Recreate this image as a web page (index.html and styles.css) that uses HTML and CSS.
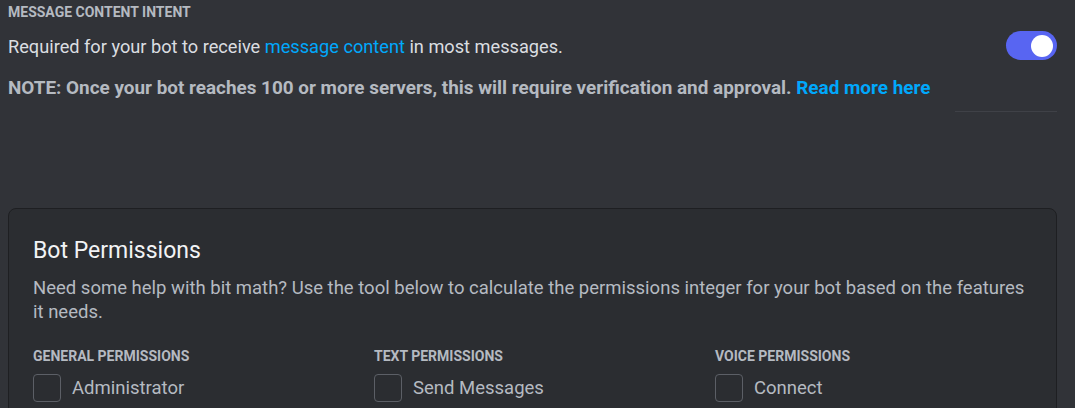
FILE: index.html
```html
<!DOCTYPE html>
<html>
<head>
<meta charset="utf-8">
<link rel="stylesheet" href="styles.css">
</head>
<body>
<div class="page">
  <section class="intent">
    <div class="intent-title">MESSAGE CONTENT INTENT</div>
    <div class="intent-row">
      <div class="intent-text">Required for your bot to receive <a class="link" href="#">message content</a> in most messages.</div>
      <div class="toggle"><span class="knob"></span></div>
    </div>
    <div class="note">NOTE: Once your bot reaches 100 or more servers, this will require verification and approval. <a class="link" href="#">Read more here</a></div>
    <div class="divider-row"><div class="divider"></div></div>
  </section>

  <section class="card">
    <h2 class="card-title">Bot Permissions</h2>
    <p class="card-desc">Need some help with bit math? Use the tool below to calculate the permissions integer for your bot based on the features it needs.</p>
    <div class="perm-grid">
      <div class="perm-col">
        <div class="perm-head">GENERAL PERMISSIONS</div>
        <label class="perm-item"><span class="box"></span><span class="perm-label">Administrator</span></label>
      </div>
      <div class="perm-col">
        <div class="perm-head">TEXT PERMISSIONS</div>
        <label class="perm-item"><span class="box"></span><span class="perm-label">Send Messages</span></label>
      </div>
      <div class="perm-col">
        <div class="perm-head">VOICE PERMISSIONS</div>
        <label class="perm-item"><span class="box"></span><span class="perm-label">Connect</span></label>
      </div>
    </div>
  </section>
</div>
</body>
</html>
```
FILE: styles.css
```css
* { box-sizing: border-box; }
html, body {
  margin: 0;
  padding: 0;
  background: #313338;
  height: 100%;
  overflow: hidden;
}
body {
  font-family: Roboto, "Noto Sans", sans-serif;
  color: #dbdee1;
}
.page {
  padding: 0 18px 0 8px;
}
.intent-title {
  margin-top: 2px;
  font-size: 14px;
  font-weight: 700;
  line-height: 20px;
  color: #b5bac1;
}
.intent-row {
  margin-top: 9px;
  display: flex;
  align-items: center;
  justify-content: space-between;
  height: 29px;
}
.intent-text {
  font-size: 18.2px;
  line-height: 24px;
  padding-top: 2px;
  color: #dbdee1;
}
.link {
  color: #00a8fc;
  text-decoration: none;
}
.toggle {
  width: 51px;
  height: 29px;
  border-radius: 15px;
  background: #5865f2;
  display: flex;
  align-items: center;
  justify-content: flex-end;
  padding-right: 4px;
}
.knob {
  width: 22px;
  height: 22px;
  border-radius: 50%;
  background: #ffffff;
}
.note {
  margin-top: 16px;
  font-size: 18.9px;
  line-height: 24px;
  font-weight: 700;
  color: #b5bac1;
}
.divider-row {
  display: flex;
  justify-content: flex-end;
  margin-top: 11px;
}
.divider {
  width: 102px;
  height: 1px;
  background: #3f4147;
}
.card {
  margin-top: 96px;
  background: #2b2d31;
  border: 1px solid #1e1f22;
  border-radius: 8px;
  padding: 28px 24px 20px 24px;
  height: 260px;
}
.card-title {
  margin: 0;
  font-size: 23px;
  line-height: 28px;
  font-weight: 400;
  color: #f2f3f5;
}
.card-desc {
  margin: 11px 0 0 0;
  font-size: 18.5px;
  line-height: 24px;
  color: #b5bac1;
}
.perm-grid {
  margin-top: 24px;
  display: grid;
  grid-template-columns: repeat(3, 1fr);
  column-gap: 24px;
}
.perm-head {
  font-size: 14px;
  line-height: 16px;
  font-weight: 700;
  color: #b5bac1;
}
.perm-item {
  margin-top: 10px;
  display: flex;
  align-items: center;
  gap: 11px;
}
.box {
  width: 28px;
  height: 28px;
  border: 1px solid #5c5f66;
  border-radius: 4px;
  flex: none;
}
.perm-label {
  font-size: 18.5px;
  line-height: 24px;
  color: #b5bac1;
}
```
